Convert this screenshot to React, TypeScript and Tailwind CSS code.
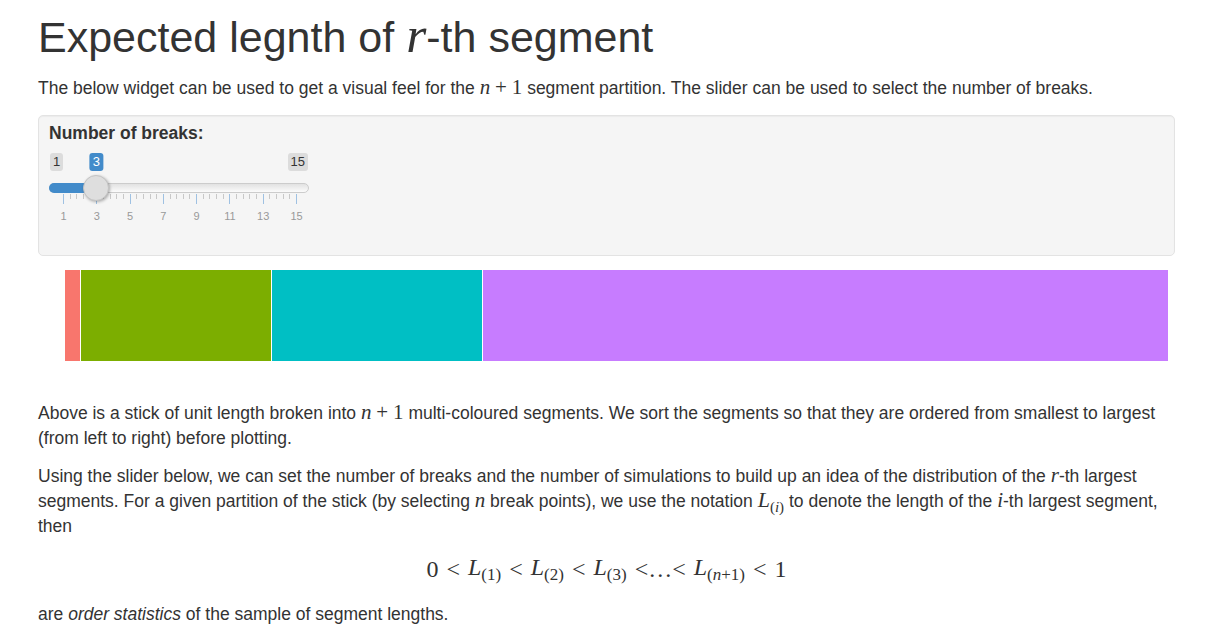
import React from "react";

const serif = { fontFamily: '"Liberation Serif", "DejaVu Serif", serif' };

function V({ children }: { children: React.ReactNode }) {
  return (
    <span className="italic text-[1.2em] leading-[0]" style={serif}>
      {children}
    </span>
  );
}

function R({ children }: { children: React.ReactNode }) {
  return (
    <span className="text-[1.2em] leading-[0]" style={serif}>
      {children}
    </span>
  );
}

function L({ sub, big }: { sub: React.ReactNode; big?: boolean }) {
  return (
    <span className="whitespace-nowrap leading-[0]" style={serif}>
      <span className={big ? "italic text-[24px] leading-[0]" : "italic text-[22px] leading-[0]"}>L</span>
      <span className={big ? "relative top-[5px] text-[17px] leading-[0]" : "relative top-[5px] text-[15px] leading-[0]"}>
        {sub}
      </span>
    </span>
  );
}

function Slider() {
  const min = 1;
  const max = 15;
  const x0 = 14;
  const x1 = 247;
  const pos = (v: number) => x0 + ((v - min) / (max - min)) * (x1 - x0);
  const ticks: { x: number; major: boolean; label?: number }[] = [];
  for (let i = 0; i <= 35; i++) {
    const v = min + (i * (max - min)) / 35;
    const major = i % 5 === 0;
    ticks.push({ x: pos(v), major, label: major ? Math.round(v) : undefined });
  }
  const hx = pos(3);
  return (
    <div className="relative h-[82px] w-[260px]" style={{ fontFamily: '"Liberation Sans", Arial, sans-serif' }}>
      <div className="absolute left-[1px] top-[3px] h-[18px] rounded-[3px] bg-[#dcdcdc] px-[3px] text-[13px] leading-[18px] text-[#333]">
        1
      </div>
      <div className="absolute right-[1px] top-[3px] h-[18px] rounded-[3px] bg-[#dcdcdc] px-[3px] text-[13px] leading-[18px] text-[#333]">
        15
      </div>
      <div
        className="absolute top-[3px] h-[18px] -translate-x-1/2 rounded-[3px] bg-[#428bca] px-[3px] text-[13px] leading-[18px] text-white"
        style={{ left: hx }}
      >
        3
      </div>
      <div className="absolute left-0 right-0 top-[33px] h-[10px] rounded-full border border-[#cccccc] bg-gradient-to-b from-[#e2e2e2] to-[#fbfbfb]" />
      <div className="absolute left-0 top-[33px] h-[10px] rounded-l-full bg-[#428bca]" style={{ width: hx }} />
      {ticks.map((t, i) => (
        <div
          key={i}
          className={
            t.major
              ? "absolute top-[44px] h-[10px] w-px bg-[#9fc1e2]"
              : "absolute top-[44px] h-[5px] w-px bg-[#c8c8c8]"
          }
          style={{ left: t.x }}
        />
      ))}
      {ticks
        .filter((t) => t.major)
        .map((t, i) => (
          <div
            key={"l" + i}
            className="absolute top-[60px] -translate-x-1/2 text-[11px] leading-[13px] text-[#999]"
            style={{ left: t.x + 0.5 }}
          >
            {t.label}
          </div>
        ))}
      <div
        className="absolute top-[25px] h-[26px] w-[26px] -translate-x-1/2 rounded-full border border-[#c4c4c4] bg-[#dedede] shadow-[1px_1px_3px_rgba(0,0,0,0.3)]"
        style={{ left: hx }}
      />
    </div>
  );
}

export default function App() {
  return (
    <div
      className="min-h-[633px] bg-white pl-[38px] pr-[52px] text-[17.5px] leading-[25px] text-[#333]"
      style={{ fontFamily: '"Liberation Sans", Arial, sans-serif' }}
    >
      <h1 className="pt-[13px] pb-[13px] text-[43px] leading-[49.5px] font-normal">
        Expected legnth of <V>r</V>
        <span>-th segment</span>
      </h1>
      <p className="mb-[14px]">
        The below widget can be used to get a visual feel for the <V>n</V> <R>+</R> <R>1</R> segment partition. The
        slider can be used to select the number of breaks.
      </p>
      <div className="rounded-[5px] border border-[#e3e3e3] bg-[#f5f5f5] px-[10px] pt-[7px] pb-[23px] shadow-[inset_0_1px_1px_rgba(0,0,0,0.04)]">
        <div className="mb-[6px] text-[17.5px] font-bold leading-[20px]">Number of breaks:</div>
        <div className="mt-[7px]">
          <Slider />
        </div>
      </div>
      <div className="ml-[27px] mt-[14px] flex h-[91px] w-[1103px] gap-px">
        <div className="w-[15px] bg-[#F8766D]" />
        <div className="w-[190px] bg-[#7CAE00]" />
        <div className="w-[210px] bg-[#00BFC4]" />
        <div className="w-[685px] bg-[#C77CFF]" />
      </div>
      <p className="mt-[40px] mb-[13px]">
        Above is a stick of unit length broken into <V>n</V> <R>+</R> <R>1</R> multi-coloured segments. We sort the
        segments so that they are ordered from smallest to largest (from left to right) before plotting.
      </p>
      <p>
        Using the slider below, we can set the number of breaks and the number of simulations to build up an idea of the
        distribution of the <V>r</V>-th largest segments. For a given partition of the stick (by selecting <V>n</V> break
        points), we use the notation{" "}
        <L
          sub={
            <>
              (<span className="italic">i</span>)
            </>
          }
        />{" "}
        to denote the length of the <V>i</V>-th largest segment, then
      </p>
      <div className="mt-[15px] flex h-[30px] items-center justify-center text-[24px] leading-[30px]" style={serif}>
        <span>0</span>
        <span className="mx-[8px]">&lt;</span>
        <L big sub="(1)" />
        <span className="mx-[8px]">&lt;</span>
        <L big sub="(2)" />
        <span className="mx-[8px]">&lt;</span>
        <L big sub="(3)" />
        <span className="ml-[8px]">&lt;…&lt;</span>
        <span className="ml-[8px]" />
        <L
          big
          sub={
            <>
              (<span className="italic">n</span>+1)
            </>
          }
        />
        <span className="mx-[8px]">&lt;</span>
        <span>1</span>
      </div>
      <p className="mt-[18px]">
        are <em>order statistics</em> of the sample of segment lengths.
      </p>
    </div>
  );
}
